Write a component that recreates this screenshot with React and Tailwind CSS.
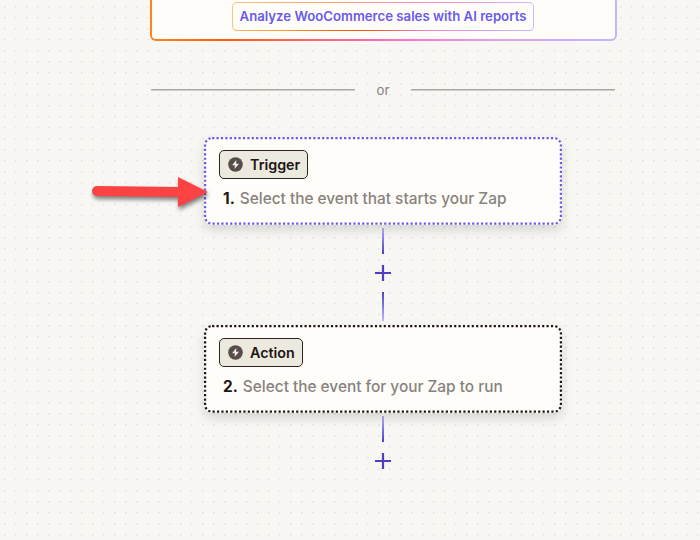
function Bolt() {
  return (
    <svg className="size-[15px] shrink-0" viewBox="0 0 15 15" fill="none">
      <circle cx="7.5" cy="7.5" r="7.3" fill="#574e4c" />
      <path d="M8.3 2.9 4.1 8.3h2.8l-.3 3.8L11 6.7H8.1z" fill="#f3f0e8" />
    </svg>
  );
}

function StepCard({ label, number, text, chip, border }) {
  return (
    <div className="relative h-[88px] w-[358px] rounded-[8px] bg-[#fffdf9] pl-[15px] pt-[13px] shadow-[0_5px_11px_rgba(60,55,50,0.17)]">
      <svg className={`absolute inset-0 h-full w-full ${border}`} viewBox="0 0 358 88" fill="none">
        <rect
          x="1.1"
          y="1.1"
          width="355.8"
          height="85.6"
          rx="7"
          stroke="currentColor"
          strokeWidth="2.2"
          strokeDasharray="2.2 2.2"
        />
      </svg>
      <div
        className={`flex h-[29px] items-center gap-[7px] rounded-[5px] border border-[#2d2323] bg-[#ece9df] pl-2 text-[14.3px] font-semibold text-[#201515] ${chip}`}
      >
        <Bolt />
        <span className="pt-px">{label}</span>
      </div>
      <div className="mt-[8px] flex gap-[5px] whitespace-nowrap pl-[4px] text-[15.4px] leading-[24px]">
        <span className="font-bold text-[#201515]">{number}</span>
        <span className="font-medium text-[#88827e]">{text}</span>
      </div>
    </div>
  );
}

function Plus() {
  return (
    <svg className="size-4" viewBox="0 0 16 16">
      <path d="M8 0v16M0 8h16" stroke="#503ebd" strokeWidth="2.2" />
    </svg>
  );
}

function Arrow() {
  return (
    <svg
      className="absolute left-[86px] top-[170px] h-[50px] w-[130px] drop-shadow-[1px_3px_2px_rgba(0,0,0,0.5)]"
      viewBox="0 0 130 50"
    >
      <path
        d="M11 16 92 17V7L122 22 92 37V27L11 26A5 5 0 0 1 11 16Z"
        fill="#fc4343"
      />
    </svg>
  );
}

export default function App() {
  return (
    <div className="relative h-[540px] w-[700px] overflow-hidden bg-[#f8f7f4] bg-[linear-gradient(135deg,#e3e1dc_0px,#e9e7e2_1.5px,transparent_1.5px)] bg-[length:11px_11px] bg-[position:4px_6px] font-['Inter',sans-serif]">
      <div className="ml-[150px] h-[41px] w-[467px] rounded-b-[6px] bg-[linear-gradient(90deg,#ff8420_0%,#ff5c0c_16%,#ff6cc0_50%,#dca4f0_75%,#c4b5ff_100%)] px-[2px] pb-[2px]">
        <div className="flex h-full rounded-b-[4px] bg-[#fffdf9] pl-[80px] pt-[2px]">
          <div className="h-[29px] w-[302px] rounded-[5px] bg-[linear-gradient(90deg,#ffc276_0%,#ffa078_35%,#f78abb_60%,#d8b5f8_100%)] px-px pt-px">
            <div className="h-[28px] rounded-[4px] bg-[linear-gradient(90deg,#ffb75e_0%,#ff9d2e_15%,#ff4a00_43%,#f080d0_65%,#c9b8fb_100%)] pb-px">
              <div className="flex h-[27px] items-center justify-center whitespace-nowrap rounded-[4px] bg-[#fffdf9] pt-px text-[13.2px] font-semibold text-[#695be8]">
                Analyze WooCommerce sales with AI reports
              </div>
            </div>
          </div>
        </div>
      </div>

      <div className="ml-[151px] mt-[39px] flex h-5 w-[464px] items-center justify-between text-[13.2px] text-[#88827e]">
        <span className="h-[2px] w-[204px] border-t border-[#aaa6a3] bg-[#d0cdca]" />
        <span className="pt-px">or</span>
        <span className="h-[2px] w-[204px] border-t border-[#aaa6a3] bg-[#d0cdca]" />
      </div>

      <div className="ml-[204px] mt-[37px] flex w-[358px] flex-col items-center">
        <StepCard
          label="Trigger"
          number="1."
          text="Select the event that starts your Zap"
          chip="w-[89px]"
          border="text-[#695be8]"
        />
        <span className="mt-[3px] h-[26px] w-[2px] bg-linear-to-b from-[#b9aff8] to-[#503ebd]" />
        <div className="mt-[11px]">
          <Plus />
        </div>
        <span className="mb-1 mt-[11px] h-[29px] w-[2px] bg-linear-to-b from-[#503ebd] to-[#c0b8fa]" />
        <StepCard
          label="Action"
          number="2."
          text="Select the event for your Zap to run"
          chip="w-[84px]"
          border="text-[#201515]"
        />
        <span className="mt-[3px] h-[26px] w-[2px] bg-linear-to-b from-[#b9aff8] to-[#503ebd]" />
        <div className="mt-[11px]">
          <Plus />
        </div>
      </div>

      <Arrow />
    </div>
  );
}
